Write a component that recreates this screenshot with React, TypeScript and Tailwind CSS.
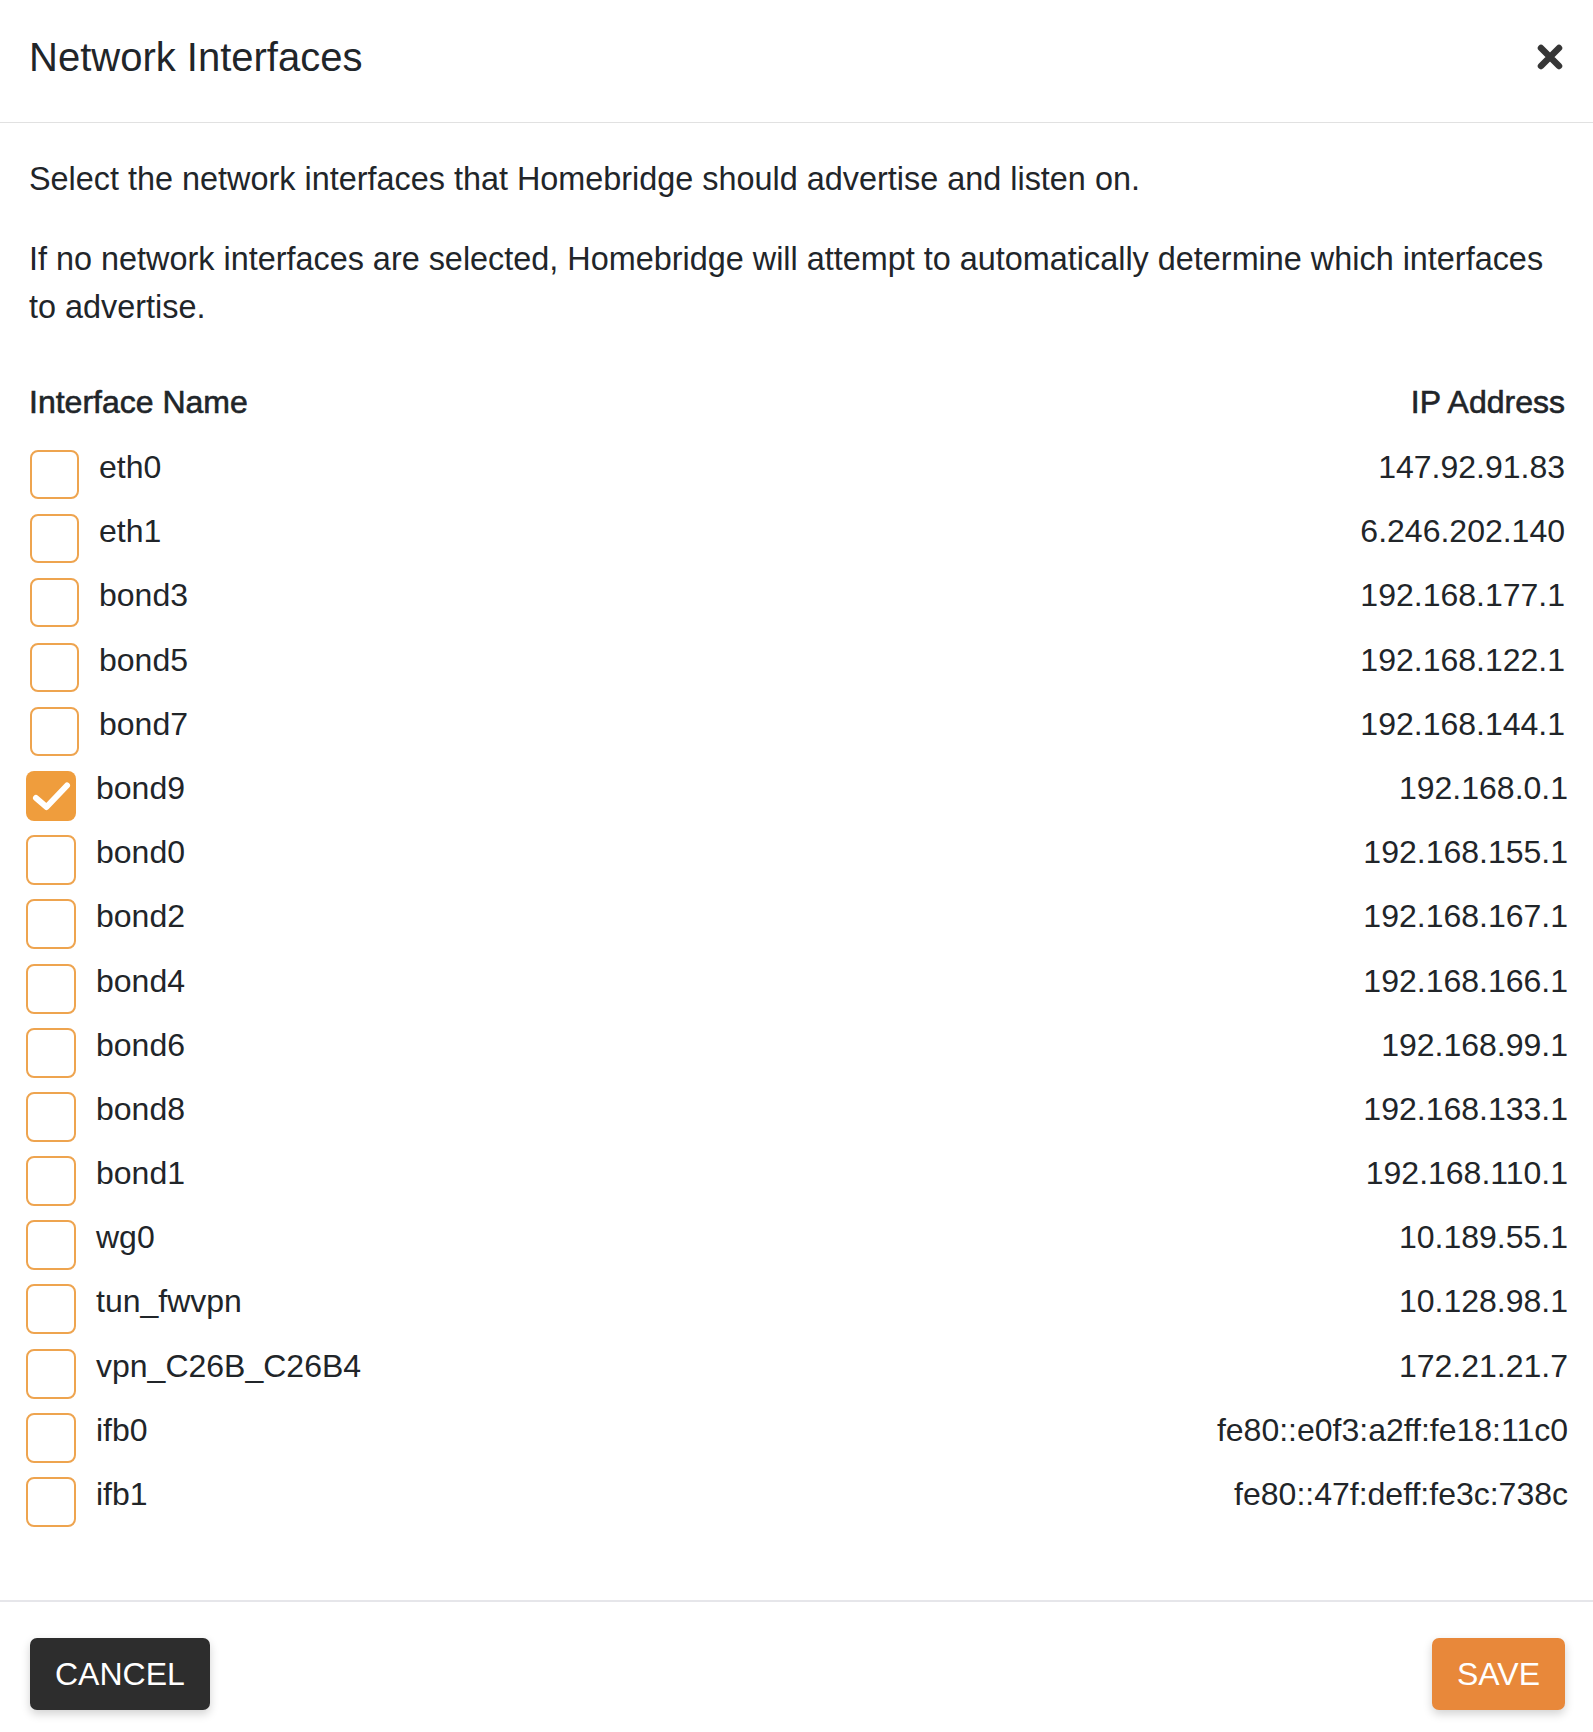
import React, { useState } from 'react';

interface NetworkInterface {
  name: string;
  address: string;
}

const interfaces: NetworkInterface[] = [
  { name: 'eth0', address: '147.92.91.83' },
  { name: 'eth1', address: '6.246.202.140' },
  { name: 'bond3', address: '192.168.177.1' },
  { name: 'bond5', address: '192.168.122.1' },
  { name: 'bond7', address: '192.168.144.1' },
  { name: 'bond9', address: '192.168.0.1' },
  { name: 'bond0', address: '192.168.155.1' },
  { name: 'bond2', address: '192.168.167.1' },
  { name: 'bond4', address: '192.168.166.1' },
  { name: 'bond6', address: '192.168.99.1' },
  { name: 'bond8', address: '192.168.133.1' },
  { name: 'bond1', address: '192.168.110.1' },
  { name: 'wg0', address: '10.189.55.1' },
  { name: 'tun_fwvpn', address: '10.128.98.1' },
  { name: 'vpn_C26B_C26B4', address: '172.21.21.7' },
  { name: 'ifb0', address: 'fe80::e0f3:a2ff:fe18:11c0' },
  { name: 'ifb1', address: 'fe80::47f:deff:fe3c:738c' },
];

const CheckBox: React.FC<{ checked: boolean; onToggle: () => void; wide: boolean }> = ({ checked, onToggle, wide }) => (
  <button
    onClick={onToggle}
    className={`mt-[15px] shrink-0 rounded-[8px] flex items-center justify-center ${wide ? 'w-[50px] h-[50px]' : 'w-[49px] h-[49px]'} ${
      checked ? 'bg-[#ef9d3d]' : 'border-2 border-[#eea44f] bg-white'
    }`}
  >
    {checked && (
      <svg width="50" height="50" viewBox="0 0 50 50">
        <path d="M10 27 L20.5 36 L41 14.5" fill="none" stroke="#fff" strokeWidth="6" strokeLinecap="round" strokeLinejoin="round" />
      </svg>
    )}
  </button>
);

export default function App() {
  const [selected, setSelected] = useState<string[]>(['bond9']);

  const toggle = (name: string) =>
    setSelected(s => (s.includes(name) ? s.filter(n => n !== name) : [...s, name]));

  return (
    <div className="w-[1593px] min-h-[1732px] bg-white text-[#212529] font-['Liberation_Sans',Arial,sans-serif]">
      {/* header */}
      <div className="h-[123px] flex items-center justify-between pl-[29px] pr-[30px] border-b border-[#e1e1e1]">
        <h5 className="text-[40px] leading-[60px] -mt-[8px]">Network Interfaces</h5>
        <button className="-mt-[8px]">
          <svg width="26" height="26" viewBox="0 0 26 26">
            <path d="M4 4 L22 22 M22 4 L4 22" stroke="#363636" strokeWidth="6.5" strokeLinecap="round" />
          </svg>
        </button>
      </div>

      {/* body */}
      <div className="pt-[32px] pl-[29px] pr-[28px] text-[32px] leading-[48px]">
        <p className="mb-[32px] text-[32.4px]">Select the network interfaces that Homebridge should advertise and listen on.</p>
        <p className="mb-[47px] pr-[10px] text-[32.4px]">
          If no network interfaces are selected, Homebridge will attempt to automatically determine which interfaces
          to advertise.
        </p>

        <div className="flex justify-between h-[57px] [-webkit-text-stroke:0.6px_#212529]">
          <span>Interface Name</span>
          <span>IP Address</span>
        </div>

        {interfaces.map((item, idx) => {
          const shifted = idx >= 5;
          return (
            <div
              key={item.name}
              className={`flex items-start h-[64.2px] ${shifted ? '-ml-[3px] -mr-[3px]' : 'ml-[1px]'}`}
            >
              <CheckBox checked={selected.includes(item.name)} onToggle={() => toggle(item.name)} wide={shifted} />
              <span className="ml-[20px] mt-[8px]">{item.name}</span>
              <span className="ml-auto mt-[8px]">{item.address}</span>
            </div>
          );
        })}
      </div>

      {/* footer */}
      <div className="mt-[74px] border-t-2 border-[#e6e6ea] pt-[36px] pb-[22px] pl-[30px] pr-[28px] flex justify-between">
        <button className="h-[72px] px-[25px] rounded-[7px] bg-[#2d2d2d] text-white text-[32px] leading-[48px] shadow-[0_4px_10px_rgba(0,0,0,0.18)]">
          CANCEL
        </button>
        <button className="h-[72px] px-[25px] rounded-[7px] bg-[#e8883a] text-white text-[32px] leading-[48px] shadow-[0_4px_10px_rgba(0,0,0,0.18)]">
          SAVE
        </button>
      </div>
    </div>
  );
}
